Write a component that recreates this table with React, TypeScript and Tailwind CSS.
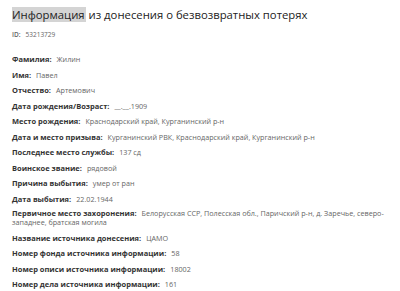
import React from "react";

const rows: { label: string; value: React.ReactNode; tight?: boolean }[] = [
  { label: "Фамилия:", value: "Жилин" },
  { label: "Имя:", value: "Павел" },
  { label: "Отчество:", value: "Артемович" },
  { label: "Дата рождения/Возраст:", value: "__.__.1909" },
  { label: "Место рождения:", value: "Краснодарский край, Курганинский р-н" },
  { label: "Дата и место призыва:", value: "Курганинский РВК, Краснодарский край, Курганинский р-н" },
  { label: "Последнее место службы:", value: "137 сд" },
  { label: "Воинское звание:", value: "рядовой" },
  { label: "Причина выбытия:", value: "умер от ран" },
  { label: "Дата выбытия:", value: "22.02.1944" },
  {
    label: "Первичное место захоронения:",
    tight: true,
    value: (
      <>
        <span className="whitespace-nowrap">
          Белорусская ССР, Полесская обл., Паричский р-н, д. Заречье, северо-
        </span>
        <br />
        западнее, братская могила
      </>
    ),
  },
  { label: "Название источника донесения:", value: "ЦАМО" },
  { label: "Номер фонда источника информации:", value: "58" },
  { label: "Номер описи источника информации:", value: "18002" },
  { label: "Номер дела источника информации:", value: "161" },
];

export default function App() {
  return (
    <div
      className="w-[400px] h-[291px] overflow-hidden bg-white pl-[12px] pr-[6px] pt-[7px]"
      style={{ fontFamily: '"Open Sans", "DejaVu Sans", sans-serif' }}
    >
      <h1 className="text-[11.3px] leading-[15px] text-[#222]">
        <span className="bg-[#d4d4d4] pr-[1px]">Информация</span> из донесения о безвозвратных потерях
      </h1>
      <p className="mt-[8px] text-[6.5px] leading-[10px] text-[#666]">
        <span className="font-semibold">ID:</span>
        <span className="ml-[5px]">53213729</span>
      </p>
      <div className="mt-[14px] flex flex-col gap-[5.5px]">
        {rows.map((r) => (
          <p
            key={r.label}
            className={
              r.tight
                ? "text-[7.5px] leading-[9px] whitespace-nowrap"
                : "text-[7.5px] leading-[10px]"
            }
          >
            <span className="font-bold text-[#333]">{r.label}</span>
            <span className="ml-[5px] text-[7.2px] text-[#666]">{r.value}</span>
          </p>
        ))}
      </div>
    </div>
  );
}
